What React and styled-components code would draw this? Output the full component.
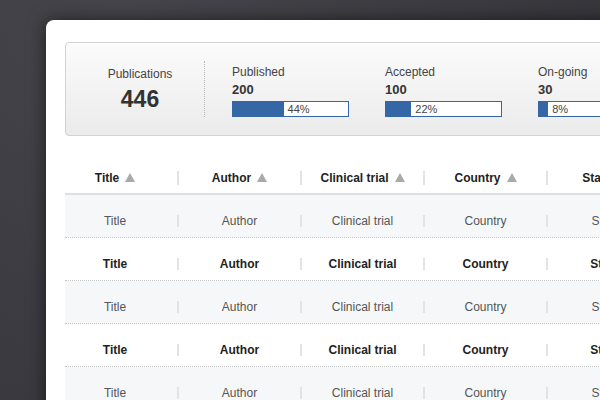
import React from 'react';
import styled, { createGlobalStyle } from 'styled-components';

const GlobalStyle = createGlobalStyle`
  html, body {
    margin: 0;
    padding: 0;
    height: 100%;
    overflow: hidden;
  }
  body {
    background: radial-gradient(circle at 20% 0%, #45454b 0%, #3a3a40 60%, #333338 100%);
    font-family: "Liberation Sans", Arial, sans-serif;
  }
`;

const Page = styled.div`
  padding: 20px 0 0 46px;
  height: 400px;
  box-sizing: border-box;
`;

const Card = styled.div`
  width: 760px;
  height: 420px;
  background: #fff;
  border-radius: 8px 8px 0 0;
  box-shadow: 0 0 18px rgba(0, 0, 0, 0.55);
  padding: 22px 0 0 19px;
  box-sizing: border-box;
`;

const StatsBox = styled.div`
  width: 640px;
  height: 94px;
  box-sizing: border-box;
  border: 1px solid #d2d2d2;
  border-radius: 4px;
  background: linear-gradient(to bottom, #fbfbfb, #ebebeb);
  box-shadow: inset 0 1px 0 #fff;
  display: flex;
  align-items: center;
`;

const Total = styled.div`
  width: 128px;
  margin-left: 10px;
  display: flex;
  flex-direction: column;
  align-items: center;
`;

const TotalLabel = styled.div`
  font-size: 12px;
  line-height: 16px;
  color: #444;
`;

const TotalNumber = styled.div`
  font-size: 23px;
  line-height: 28px;
  margin-top: 3px;
  font-weight: bold;
  color: #333;
`;

const Divider = styled.div`
  width: 0;
  height: 56px;
  border-left: 1px dotted #b8b8b8;
  margin-right: 27px;
`;

const Stat = styled.div`
  width: 153px;
  flex-shrink: 0;
  display: flex;
  flex-direction: column;
  padding-top: 2px;
`;

const StatLabel = styled.div`
  font-size: 12px;
  line-height: 16px;
  color: #444;
`;

const StatNumber = styled.div`
  font-size: 13px;
  line-height: 18px;
  margin-top: 1px;
  font-weight: bold;
  color: #333;
`;

const Bar = styled.div`
  margin-top: 2px;
  width: 117px;
  height: 16px;
  box-sizing: border-box;
  border: 1px solid #3566a6;
  background: #fff;
  display: flex;
  align-items: center;
`;

const BarFill = styled.div`
  height: 100%;
  background: #3566a6;
`;

const BarText = styled.span`
  font-size: 11px;
  color: #444;
  padding-left: 4px;
`;

const Table = styled.div`
  margin-top: 25px;
  width: 620px;
`;

const Row = styled.div`
  display: grid;
  grid-template-columns: 113px 123px 123px 123px 123px;
  align-items: center;
  box-sizing: border-box;
`;

const HeaderRow = styled(Row)`
  height: 34px;
  padding-top: 2px;
  border-bottom: 2px solid #dedede;
`;

const BodyRow = styled(Row)`
  height: 43px;
  padding-top: 10px;
  border-bottom: 1px dotted #c6c6c6;
  background: ${({ $shaded }) => ($shaded ? '#f6f7f9' : '#fff')};
`;

const Cell = styled.div`
  position: relative;
  display: flex;
  justify-content: center;
  align-items: center;
  gap: 6px;
  font-size: 12px;
  white-space: nowrap;
  color: ${({ $bold }) => ($bold ? '#222' : '#555')};
  font-weight: ${({ $bold }) => ($bold ? 'bold' : 'normal')};
  padding-right: ${({ $first }) => ($first ? '13px' : '0')};

  &::before {
    content: '';
    display: ${({ $first }) => ($first ? 'none' : 'block')};
    position: absolute;
    left: -1px;
    top: 50%;
    width: 2px;
    height: ${({ $tall }) => ($tall ? '14px' : '12px')};
    transform: translateY(-50%);
    background: #e3e3e3;
  }
`;

const SortArrow = styled.span`
  width: 0;
  height: 0;
  border-left: 5px solid transparent;
  border-right: 5px solid transparent;
  border-bottom: 9px solid #a9a9a9;
  margin-top: -2px;
`;

const columns = ['Title', 'Author', 'Clinical trial', 'Country', 'Status'];

const stats = [
  { label: 'Published', value: 200, pct: 44 },
  { label: 'Accepted', value: 100, pct: 22 },
  { label: 'On-going', value: 30, pct: 8 },
];

const App = () => (
  <>
    <GlobalStyle />
    <Page>
      <Card>
        <StatsBox>
          <Total>
            <TotalLabel>Publications</TotalLabel>
            <TotalNumber>446</TotalNumber>
          </Total>
          <Divider />
          {stats.map((s) => (
            <Stat key={s.label}>
              <StatLabel>{s.label}</StatLabel>
              <StatNumber>{s.value}</StatNumber>
              <Bar>
                <BarFill style={{ width: `${s.pct}%` }} />
                <BarText>{s.pct}%</BarText>
              </Bar>
            </Stat>
          ))}
        </StatsBox>

        <Table>
          <HeaderRow>
            {columns.map((c, i) => (
              <Cell key={c} $bold $first={i === 0} $tall>
                {c}
                <SortArrow />
              </Cell>
            ))}
          </HeaderRow>
          {[0, 1, 2, 3, 4].map((r) => (
            <BodyRow key={r} $shaded={r % 2 === 0}>
              {columns.map((c, i) => (
                <Cell key={c} $bold={r % 2 === 1} $first={i === 0}>
                  {c}
                </Cell>
              ))}
            </BodyRow>
          ))}
        </Table>
      </Card>
    </Page>
  </>
);

export default App;
